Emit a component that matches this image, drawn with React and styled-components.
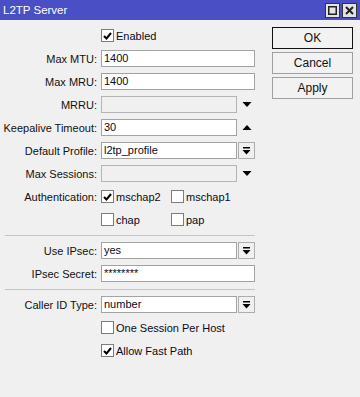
import React from "react";
import styled, { createGlobalStyle } from "styled-components";

const GlobalStyle = createGlobalStyle`
  body {
    margin: 0;
    background: #f0f0f0;
    font-family: "Liberation Sans", Arial, sans-serif;
  }
`;

const Window = styled.div`
  width: 360px;
  height: 397px;
  background: #f0f0f0;
  overflow: hidden;
`;

const TitleBar = styled.div`
  height: 20px;
  background: #4a4fc6;
  display: flex;
  align-items: center;
  justify-content: space-between;
  padding: 0 3px 0 3px;
  color: #fff;
  font-size: 11.5px;
`;

const WinButtons = styled.div`
  display: flex;
  gap: 2px;
`;

const WinButton = styled.div`
  width: 13px;
  height: 13px;
  background: #e4e4e4;
  border: 1px solid #333;
  display: flex;
  align-items: center;
  justify-content: center;
`;

const Body = styled.div`
  display: flex;
  padding-top: 7px;
`;

const Form = styled.div`
  width: 255px;
  display: flex;
  flex-direction: column;
  gap: 6px;
`;

const Row = styled.div`
  display: grid;
  grid-template-columns: 97px 1fr;
  column-gap: 4px;
  height: 17px;
  align-items: center;
`;

const Label = styled.div`
  text-align: right;
  font-size: 11px;
  color: #111;
  white-space: nowrap;
`;

const Controls = styled.div`
  display: flex;
  align-items: center;
  height: 17px;
`;

const Field = styled.div`
  box-sizing: border-box;
  width: ${(p) => (p.$short ? 136 : 154)}px;
  height: 17px;
  border: 1px solid ${(p) => (p.$disabled ? "#b4b4b4" : "#a3a3a3")};
  background: ${(p) => (p.$disabled ? "#f0f0f0" : "#fff")};
  font-size: 11px;
  color: #0a0a20;
  padding: 0 2px;
  line-height: 15px;
  white-space: nowrap;
  overflow: hidden;
`;

const Slot = styled.div`
  box-sizing: border-box;
  width: 17px;
  height: 17px;
  margin-left: 1px;
  display: flex;
  align-items: center;
  justify-content: center;
  border: ${(p) => (p.$boxed ? "1px solid #adadad" : "none")};
`;

const Checks = styled.div`
  display: flex;
  align-items: center;
`;

const CheckItem = styled.div`
  display: flex;
  align-items: center;
  gap: 2px;
  width: ${(p) => p.$w || 70}px;
  font-size: 11px;
  color: #0a0a20;
  white-space: nowrap;
`;

const Box = styled.div`
  box-sizing: border-box;
  width: 13px;
  height: 13px;
  border: 1px solid #7c7c7c;
  background: #fff;
  display: flex;
  align-items: center;
  justify-content: center;
`;

const Divider = styled.div`
  height: 1px;
  margin-top: 1px;
  background: #c4c4c4;
  margin-left: 5px;
`;

const Side = styled.div`
  margin-left: 17px;
  width: 81px;
  display: flex;
  flex-direction: column;
  gap: 3px;
`;

const Button = styled.div`
  box-sizing: border-box;
  height: 22px;
  border: 1px solid ${(p) => (p.$primary ? "#111" : "#a0a0a0")};
  background: #f2f2f2;
  display: flex;
  align-items: center;
  justify-content: center;
  font-size: 12px;
  color: #111;
`;

const Tick = () => (
  <svg width="9" height="8" viewBox="0 0 9 8">
    <path d="M1 4 L3.5 6.5 L8 1" stroke="#000" strokeWidth="2" fill="none" />
  </svg>
);

const Check = ({ on, label, w }) => (
  <CheckItem $w={w}>
    <Box>{on && <Tick />}</Box>
    <span>{label}</span>
  </CheckItem>
);

const DownArrow = () => (
  <svg width="10" height="5" viewBox="0 0 10 5">
    <path d="M0.5 0 L9.5 0 L5 5 Z" fill="#000" />
  </svg>
);

const UpArrow = () => (
  <svg width="10" height="5" viewBox="0 0 10 5">
    <path d="M0.5 5 L9.5 5 L5 0 Z" fill="#000" />
  </svg>
);

const Drop = () => (
  <Slot $boxed>
    <svg width="9" height="8" viewBox="0 0 9 8">
      <rect x="1" y="0" width="7" height="1.5" fill="#000" />
      <path d="M0.5 3 L8.5 3 L4.5 7.5 Z" fill="#000" />
    </svg>
  </Slot>
);

const FieldRow = ({ label, value, short, disabled, extra }) => (
  <Row>
    <Label>{label}</Label>
    <Controls>
      <Field $short={short} $disabled={disabled}>
        {value}
      </Field>
      {extra}
    </Controls>
  </Row>
);

export default function App() {
  return (
    <Window>
      <GlobalStyle />
      <TitleBar>
        <span>L2TP Server</span>
        <WinButtons>
          <WinButton>
            <svg width="9" height="9" viewBox="0 0 9 9">
              <rect x="0.75" y="0.75" width="7.5" height="7.5" fill="none" stroke="#222" strokeWidth="1.5" />
            </svg>
          </WinButton>
          <WinButton>
            <svg width="9" height="9" viewBox="0 0 9 9">
              <path d="M1 1 L8 8 M8 1 L1 8" stroke="#222" strokeWidth="2" />
            </svg>
          </WinButton>
        </WinButtons>
      </TitleBar>
      <Body>
        <Form>
          <Row>
            <Label />
            <Checks>
              <Check on label="Enabled" />
            </Checks>
          </Row>
          <FieldRow label="Max MTU:" value="1400" />
          <FieldRow label="Max MRU:" value="1400" />
          <FieldRow
            label="MRRU:"
            short
            disabled
            extra={
              <Slot>
                <DownArrow />
              </Slot>
            }
          />
          <FieldRow
            label="Keepalive Timeout:"
            value="30"
            short
            extra={
              <Slot>
                <UpArrow />
              </Slot>
            }
          />
          <FieldRow label="Default Profile:" value="l2tp_profile" short extra={<Drop />} />
          <FieldRow
            label="Max Sessions:"
            short
            disabled
            extra={
              <Slot>
                <DownArrow />
              </Slot>
            }
          />
          <Row>
            <Label>Authentication:</Label>
            <Checks>
              <Check on label="mschap2" />
              <Check label="mschap1" />
            </Checks>
          </Row>
          <Row>
            <Label />
            <Checks>
              <Check label="chap" />
              <Check label="pap" />
            </Checks>
          </Row>
          <Divider />
          <FieldRow label="Use IPsec:" value="yes" short extra={<Drop />} />
          <FieldRow label="IPsec Secret:" value="********" />
          <Divider />
          <FieldRow label="Caller ID Type:" value="number" short extra={<Drop />} />
          <Row>
            <Label />
            <Checks>
              <Check label="One Session Per Host" w={150} />
            </Checks>
          </Row>
          <Row>
            <Label />
            <Checks>
              <Check on label="Allow Fast Path" w={150} />
            </Checks>
          </Row>
        </Form>
        <Side>
          <Button $primary>OK</Button>
          <Button>Cancel</Button>
          <Button>Apply</Button>
        </Side>
      </Body>
    </Window>
  );
}
